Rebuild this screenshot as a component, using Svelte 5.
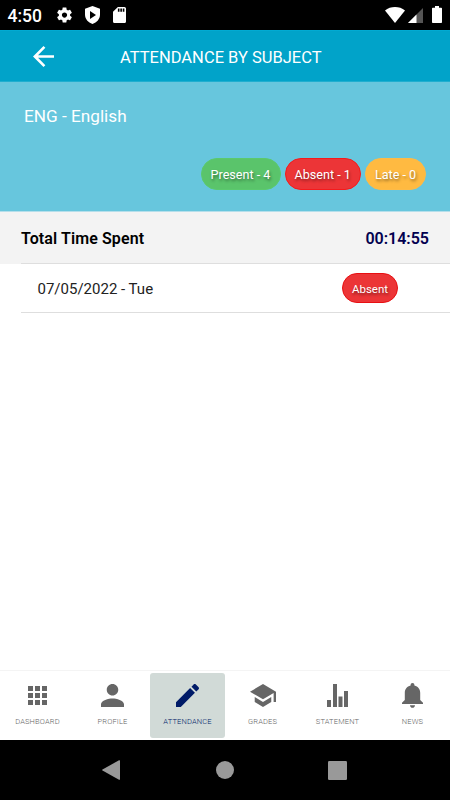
<script lang="ts">
    const summary = [
        { label: "Present - 4", kind: "present" },
        { label: "Absent - 1", kind: "absent" },
        { label: "Late - 0", kind: "late" },
    ];

    const records = [{ date: "07/05/2022 - Tue", status: "Absent" }];

    const tabs = [
        { name: "DASHBOARD", w: 19, h: 19, box: "0 0 19 19", path: "M0 0h5v5H0zM7 0h5v5H7zM14 0h5v5h-5zM0 7h5v5H0zM7 7h5v5H7zM14 7h5v5h-5zM0 14h5v5H0zM7 14h5v5H7zM14 14h5v5h-5z" },
        { name: "PROFILE", w: 23, h: 23, box: "4 4 16 16", path: "M12 12c2.21 0 4-1.79 4-4s-1.79-4-4-4-4 1.79-4 4 1.79 4 4 4zm0 2c-2.67 0-8 1.34-8 4v2h16v-2c0-2.66-5.33-4-8-4z" },
        { name: "ATTENDANCE", w: 23, h: 23, box: "3 3 18 18", path: "M3 17.25V21h3.75L17.81 9.94l-3.75-3.75L3 17.25zM20.71 7.04c.39-.39.39-1.02 0-1.41l-2.34-2.34c-.39-.39-1.02-.39-1.41 0l-1.83 1.83 3.75 3.75 1.83-1.83z" },
        { name: "GRADES", w: 26, h: 23, box: "1 3 22 18", path: "M5 13.18v4L12 21l7-3.82v-4L12 17l-7-3.82zM12 3L1 9l11 6 9-4.91V17h2V9L12 3z" },
        { name: "STATEMENT", w: 21, h: 23, box: "0 0 21 23", path: "M0 16h4v7H0zM6 0h4v23H6zM11.5 12.5h4V23h-4zM17 7h4v16h-4z" },
        { name: "NEWS", w: 21, h: 25, box: "0 0 21 25", path: "M10.5 0c1.2 0 1.9.8 1.9 1.9v.6c3.8.8 5.8 3.8 5.8 7.3V17l2.800 2.700V21H0v-1.300L2.800 17V9.800c0-3.500 2-6.500 5.800-7.300v-.6C8.600.8 9.300 0 10.500 0zM8 22.200h5c0 1.500-1.100 2.600-2.500 2.600S8 23.700 8 22.200z" },
    ];

    let active = "ATTENDANCE";
</script>

<div class="screen">
    <div class="status">
        <span class="clock">4:50</span>
        <svg class="gear" viewBox="2 2 20 20"><path d="M19.43 12.98c.04-.32.07-.64.07-.98s-.03-.66-.07-.98l2.11-1.65c.19-.15.24-.42.12-.64l-2-3.46c-.12-.22-.39-.3-.61-.22l-2.49 1c-.52-.4-1.08-.73-1.69-.98l-.38-2.65C14.46 2.18 14.25 2 14 2h-4c-.25 0-.46.18-.49.42l-.38 2.65c-.61.25-1.17.59-1.69.98l-2.49-1c-.23-.09-.49 0-.61.22l-2 3.46c-.13.22-.07.49.12.64l2.11 1.65c-.04.32-.07.65-.07.98s.03.66.07.98l-2.11 1.65c-.19.15-.24.42-.12.64l2 3.46c.12.22.39.3.61.22l2.49-1c.52.4 1.08.73 1.69.98l.38 2.65c.03.24.24.42.49.42h4c.25 0 .46-.18.49-.42l.38-2.65c.61-.25 1.17-.59 1.69-.98l2.49 1c.23.09.49 0 .61-.22l2-3.46c.12-.22.07-.49-.12-.64l-2.11-1.65zM12 15.5c-1.93 0-3.5-1.57-3.5-3.5s1.57-3.5 3.5-3.5 3.5 1.57 3.5 3.5-1.57 3.5-3.5 3.5z" /></svg>
        <svg class="shield" viewBox="0 0 15 18"><path fill-rule="evenodd" d="M7.5 0L15 2.8V8.500c0 4.500-3.200 8-7.500 9.500C3.200 16.500 0 13 0 8.500V2.800zM5 5v8l6-4z" /></svg>
        <svg class="card" viewBox="4 2 16 20" preserveAspectRatio="none"><path d="M18 2h-8L4 8v12c0 1.100.9 2 2 2h12c1.100 0 2-.9 2-2V4c0-1.100-.9-2-2-2zm-6 6h-2V4h2v4zm3 0h-2V4h2v4zm3 0h-2V4h2v4z" /></svg>
        <span class="spacer"></span>
        <svg class="wifi" viewBox="0 0 20 16"><path d="M0 3.500C5.500-1.100 14.500-1.100 20 3.500L10 16z" /></svg>
        <svg class="signal" viewBox="0 0 15 15"><path class="dim" d="M0 15L15 0v15z" /><path d="M0 15l8.500-8.500V15z" /></svg>
        <svg class="battery" viewBox="0 0 10 17"><path d="M3 0h4v1.700h2.200c.5 0 .8.300.8.800v13.700c0 .5-.3.800-.8.800H.8c-.5 0-.8-.3-.8-.8V2.500c0-.5.300-.8.800-.8H3z" /></svg>
    </div>

    <header>
        <svg class="back" viewBox="4 4 16 16"><path d="M20 11H7.83l5.59-5.59L12 4l-8 8 8 8 1.41-1.41L7.83 13H20v-2z" /></svg>
        <h1>ATTENDANCE BY SUBJECT</h1>
    </header>

    <section class="subject">
        <h2>ENG - English</h2>
        <div class="summary">
            {#each summary as item (item.kind)}
                <span class="badge {item.kind}">{item.label}</span>
            {/each}
        </div>
    </section>

    <div class="total">
        <span class="name">Total Time Spent</span>
        <span class="time">00:14:55</span>
    </div>

    <main>
        {#each records as record (record.date)}
            <div class="record">
                <span class="date">{record.date}</span>
                <span class="badge absent small">{record.status}</span>
            </div>
        {/each}
    </main>

    <nav class="tabs">
        {#each tabs as tab (tab.name)}
            <button class="tab" class:active={active === tab.name} on:click={() => (active = tab.name)}>
                <span class="icon">
                    <svg width={tab.w} height={tab.h} viewBox={tab.box} preserveAspectRatio="none"><path d={tab.path} /></svg>
                </span>
                <span class="label">{tab.name}</span>
            </button>
        {/each}
    </nav>

    <div class="system">
        <svg width="18" height="20" viewBox="0 0 18 20"><path d="M18 .8v18.400q0 1-1 .5L.5 10.600q-.9-.6 0-1.200L17 .3q1-.5 1 .5z" /></svg>
        <svg width="18" height="18" viewBox="0 0 18 18"><circle cx="9" cy="9" r="9" /></svg>
        <svg class="recent" width="19" height="19" viewBox="0 0 19 19"><rect width="19" height="19" rx="1.2" /></svg>
    </div>
</div>

<style>
    :global(body) {
        margin: 0;
    }

    .screen {
        display: flex;
        flex-direction: column;
        width: 450px;
        height: 800px;
        overflow: hidden;
        background: white;
        font-family: Roboto, "Liberation Sans", sans-serif;
    }

    svg {
        display: block;
        flex: none;
        fill: currentColor;
    }

    .status {
        display: flex;
        align-items: center;
        box-sizing: border-box;
        height: 30px;
        padding: 0 8px 0 7.5px;
        background: black;
        color: white;
    }

    .clock {
        width: 49.5px;
        font-size: 17.5px;
        font-weight: 500;
        line-height: 30px;
        padding-top: 1px;
    }

    .gear {
        width: 15px;
        height: 16px;
    }

    .shield {
        width: 15px;
        height: 18px;
        margin-left: 13px;
    }

    .card {
        width: 13px;
        height: 16px;
        margin-left: 13px;
    }

    .spacer {
        flex: 1;
    }

    .wifi {
        width: 20px;
        height: 16px;
    }

    .signal {
        width: 15px;
        height: 15px;
        margin: 1px 9px 0 3px;
    }

    .dim {
        fill: #555;
    }

    .battery {
        width: 10px;
        height: 17px;
        margin-bottom: 1px;
    }

    header {
        display: flex;
        align-items: center;
        box-sizing: border-box;
        height: 52px;
        padding-left: 33px;
        background: #01a3c9;
        border-top: 1px solid #02aad2;
        border-bottom: 1px solid #20aecf;
        color: white;
    }

    .back {
        width: 21px;
        height: 21px;
    }

    h1 {
        margin: 2px 0 0 66px;
        font-size: 16.5px;
        font-weight: 400;
        white-space: nowrap;
    }

    .subject {
        box-sizing: border-box;
        height: 130px;
        padding: 22px 24px 0;
        background: #67c6dd;
        border-bottom: 1px solid #b5dfeb;
        color: white;
    }

    h2 {
        margin: 0;
        font-size: 17.2px;
        font-weight: 400;
        line-height: 24px;
    }

    .summary {
        display: flex;
        justify-content: flex-end;
        gap: 4px;
        margin-top: 30px;
    }

    .badge {
        box-sizing: border-box;
        height: 32px;
        border: 1px solid;
        border-radius: 16px;
        color: white;
        font-size: 12.6px;
        line-height: 32px;
        text-align: center;
        text-shadow: 1px 2px 3px rgba(0, 0, 0, 0.45);
        white-space: nowrap;
    }

    .present {
        width: 80px;
        background: #5ac46b;
        border-color: #5bc96d;
    }

    .absent {
        width: 76.5px;
        background: #ec3537;
        border-color: #f51a1c;
    }

    .late {
        width: 61px;
        background: #ffba41;
        border-color: #fdbb48;
    }

    .total {
        display: flex;
        justify-content: space-between;
        height: 52px;
        padding: 0 21px;
        background: #f3f3f3;
        color: black;
        font-size: 16px;
        font-weight: 600;
        line-height: 54px;
    }

    .name {
        letter-spacing: 0.1px;
    }

    .time {
        color: #02004f;
    }

    main {
        flex: 1;
        margin-top: -1px;
        padding-left: 21px;
    }

    .record {
        display: flex;
        align-items: center;
        justify-content: space-between;
        box-sizing: border-box;
        height: 50px;
        padding: 0 52px 0 16.5px;
        border-top: 1px solid #dedede;
        border-bottom: 1px solid #dedede;
    }

    .date {
        padding-top: 1px;
        color: #222;
        font-size: 15px;
    }

    .small {
        width: 56px;
        height: 30px;
        border-color: #e80f12;
        font-size: 11.5px;
        line-height: 30px;
    }

    .tabs {
        display: flex;
        box-sizing: border-box;
        height: 70px;
        padding: 2px 0;
        border-top: 1px solid #f4f4f4;
    }

    .tab {
        display: flex;
        flex: 1;
        flex-direction: column;
        align-items: center;
        min-width: 0;
        padding: 0;
        border: 0;
        border-radius: 3px;
        background: none;
        color: #666;
        font-family: inherit;
        cursor: pointer;
    }

    .icon {
        display: flex;
        align-items: center;
        height: 45px;
    }

    .label {
        font-size: 7.5px;
        font-weight: 300;
        line-height: 8px;
        letter-spacing: 0.15px;
    }

    .active {
        background: #d1dad7;
        color: #001b68;
    }

    .system {
        display: flex;
        align-items: center;
        gap: 96px;
        height: 60px;
        padding-left: 102px;
        background: black;
        color: #999;
    }

    .recent {
        margin-left: -2px;
    }
</style>
